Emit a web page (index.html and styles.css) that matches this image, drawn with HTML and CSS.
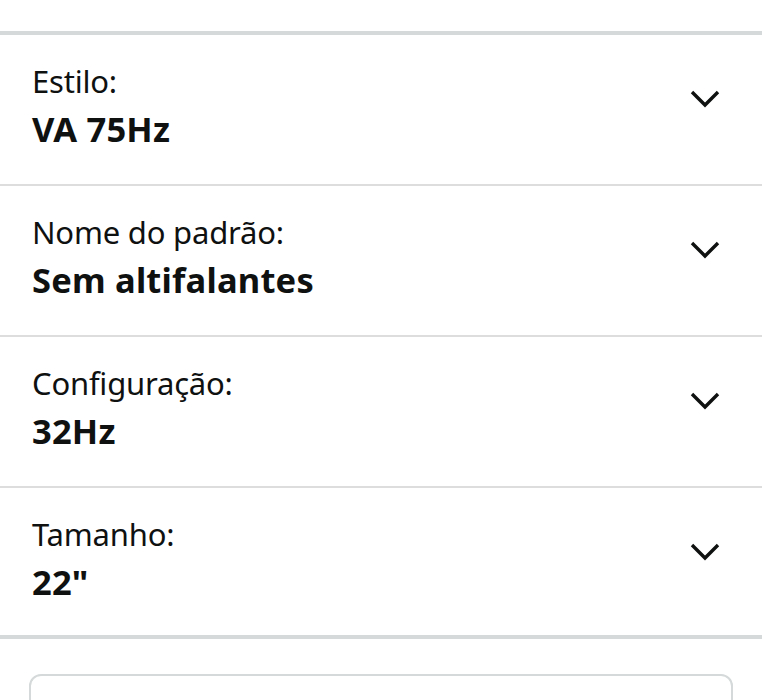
FILE: index.html
```html
<!DOCTYPE html>
<html lang="pt">
<head>
<meta charset="utf-8">
<link rel="stylesheet" href="styles.css">
</head>
<body>
<div class="page">
  <div class="spacer-top"></div>
  <div class="variations">
    <div class="row">
      <div class="texts">
        <div class="label">Estilo:</div>
        <div class="value">VA 75Hz</div>
      </div>
      <svg class="chev" viewBox="0 0 30 18" width="30" height="18"><path d="M2 2 L15 15 L28 2" fill="none" stroke="#0f1111" stroke-width="3.4"/></svg>
    </div>
    <div class="row">
      <div class="texts">
        <div class="label">Nome do padrão:</div>
        <div class="value">Sem altifalantes</div>
      </div>
      <svg class="chev" viewBox="0 0 30 18" width="30" height="18"><path d="M2 2 L15 15 L28 2" fill="none" stroke="#0f1111" stroke-width="3.4"/></svg>
    </div>
    <div class="row">
      <div class="texts">
        <div class="label">Configuração:</div>
        <div class="value">32Hz</div>
      </div>
      <svg class="chev" viewBox="0 0 30 18" width="30" height="18"><path d="M2 2 L15 15 L28 2" fill="none" stroke="#0f1111" stroke-width="3.4"/></svg>
    </div>
    <div class="row last">
      <div class="texts">
        <div class="label">Tamanho:</div>
        <div class="value">22"</div>
      </div>
      <svg class="chev" viewBox="0 0 30 18" width="30" height="18"><path d="M2 2 L15 15 L28 2" fill="none" stroke="#0f1111" stroke-width="3.4"/></svg>
    </div>
  </div>
  <div class="box"></div>
</div>
</body>
</html>
```
FILE: styles.css
```css
* { box-sizing: border-box; }
html, body { margin: 0; padding: 0; background: #fff; }
body {
  font-family: "Noto Sans", "Open Sans", "Liberation Sans", sans-serif;
  color: #0f1111;
  width: 762px;
  height: 700px;
  overflow: hidden;
}
.spacer-top { height: 31px; }
.variations {
  border-top: 4px solid #d5d9d9;
  border-bottom: 4px solid #d5d9d9;
}
.row {
  display: flex;
  align-items: flex-start;
  justify-content: space-between;
  height: 151px;
  padding: 23px 42px 0 32px;
  border-bottom: 2px solid #dddddd;
}
.row.last { border-bottom: none; height: 147px; }
.texts { display: flex; flex-direction: column; }
.label {
  font-size: 31px;
  line-height: 46px;
  font-weight: 400;
  letter-spacing: -0.2px;
}
.value {
  font-size: 34.5px;
  line-height: 50px;
  font-weight: 700;
  letter-spacing: 0.2px;
}
.chev { margin-top: 32px; }
.box {
  margin: 35px 29px 0 29px;
  height: 60px;
  border: 2px solid #d5d9d9;
  border-radius: 12px;
}
```
